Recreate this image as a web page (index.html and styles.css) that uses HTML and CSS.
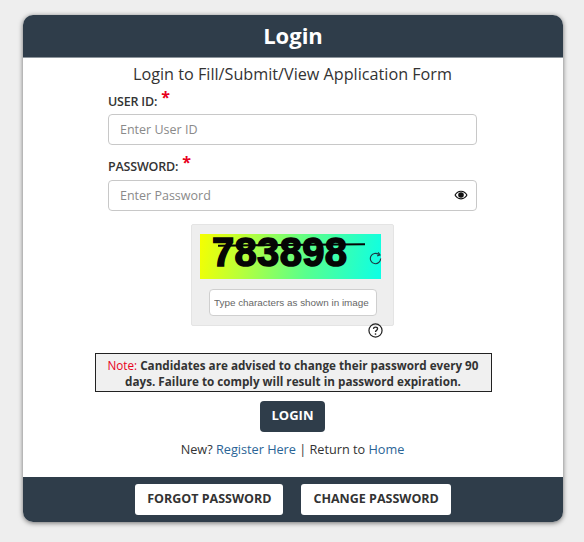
FILE: index.html
```html
<!DOCTYPE html>
<html lang="en">
<head>
  <meta charset="UTF-8">
  <meta name="viewport" content="width=device-width, initial-scale=1.0">
  <title>Login</title>
  <link rel="stylesheet" href="styles.css">
</head>
<body>

  <div class="card">
    <div class="card-head">Login</div>

    <div class="card-body">
      <p class="subtitle">Login to Fill/Submit/View Application Form</p>

      <div class="field">
        <label class="field-label">USER ID: <span class="req">*</span></label>
        <input type="text" class="text-input" placeholder="Enter User ID">
      </div>

      <div class="field">
        <label class="field-label">PASSWORD: <span class="req">*</span></label>
        <div class="input-wrap">
          <input type="password" class="text-input" placeholder="Enter Password">
          <svg class="eye" viewBox="0 0 16 16" aria-hidden="true">
            <path d="M8 3C4.500 3 1.700 5.200.500 8c1.200 2.800 4 5 7.500 5s6.300-2.200 7.500-5C14.300 5.200 11.500 3 8 3zm0 8.800C5.500 11.800 3.200 10.300 2 8c1.200-2.300 3.500-3.800 6-3.800s4.800 1.500 6 3.800c-1.200 2.300-3.500 3.800-6 3.800z"/>
            <circle cx="8" cy="8" r="3.200"/>
          </svg>
        </div>
      </div>

      <div class="captcha">
        <div class="captcha-img">
          <span class="captcha-code">783898</span>
          <span class="captcha-strike"></span>
          <svg class="refresh" viewBox="0 0 16 16" aria-hidden="true">
            <path d="M13.500 8A5.500 5.500 0 1 1 11.500 3.800" fill="none" stroke="#1d3a44" stroke-width="1.200"/>
            <path d="M10.800 1.500l2 2.800-3 .9" fill="none" stroke="#1d3a44" stroke-width="1.200"/>
          </svg>
        </div>
        <input type="text" class="captcha-input" placeholder="Type characters as shown in image">
        <svg class="help" viewBox="0 0 16 16" aria-hidden="true">
          <circle cx="8" cy="8" r="7" fill="none" stroke="#222" stroke-width="1.300"/>
          <path d="M5.800 6.300C5.900 5 6.800 4.300 8 4.300c1.300 0 2.200.8 2.200 1.900 0 1.700-2.200 1.600-2.200 3.400" fill="none" stroke="#222" stroke-width="1.400"/>
          <circle cx="8" cy="11.700" r=".9" fill="#222"/>
        </svg>
      </div>

      <div class="note">
        <span class="note-tag">Note:</span> <b>Candidates are advised to change their password every 90 days. Failure to comply will result in password expiration.</b>
      </div>

      <button class="btn-login">LOGIN</button>

      <p class="links">New? <a href="#">Register Here</a> | Return to <a href="#">Home</a></p>
    </div>

    <div class="card-foot">
      <button class="btn-foot">FORGOT PASSWORD</button>
      <button class="btn-foot">CHANGE PASSWORD</button>
    </div>
  </div>

</body>
</html>
```

FILE: styles.css
```css
* { box-sizing: border-box; }
body {
  margin: 0;
  height: 542px;
  padding: 15px 21px 0 23px;
  background-color: #eeeeee;
  font-family: "Open Sans", sans-serif;
  color: #333;
  overflow: hidden;
}
.card {
  width: 540px;
  height: 507px;
  background-color: white;
  border-radius: 10px;
  box-shadow: 0 1px 5px rgba(0, 0, 0, 0.55);
  display: flex;
  flex-direction: column;
  overflow: hidden;
}
.card-head {
  height: 43px;
  background-color: #2f3d4a;
  border-bottom: 1px solid #8d959c;
  color: white;
  font-size: 22px;
  font-weight: 700;
  line-height: 40px;
  text-align: center;
}
.card-body {
  flex: 1;
  display: flex;
  flex-direction: column;
  align-items: center;
}
.subtitle {
  margin: 5px 1px 0 0;
  font-size: 16.200px;
  line-height: 22px;
  text-align: center;
}
.field {
  width: 369px;
  margin-right: 1px;
}
.field-label {
  display: block;
  height: 29px;
  padding-top: 4px;
  font-size: 12.500px;
  line-height: 17px;
  font-weight: 600;
  letter-spacing: -0.2px;
}
.field + .field .field-label {
  height: 35px;
  padding-top: 9px;
}
.req {
  color: #e8001c;
  font-size: 16px;
  font-weight: 700;
  margin-left: 1px;
  vertical-align: 3px;
  line-height: 1;
}
.input-wrap { position: relative; }
.text-input {
  display: block;
  width: 100%;
  height: 31px;
  padding: 0 12px 0 11px;
  border: 1px solid #c8c8c8;
  border-radius: 4px;
  background: white;
  font-family: "Open Sans", sans-serif;
  font-size: 12.500px;
  color: #333;
}
.text-input::placeholder { color: #8a8a8a; opacity: 1; }
.eye {
  position: absolute;
  right: 9px;
  top: 8px;
  width: 14px;
  height: 14px;
  fill: #111;
}
.captcha {
  position: relative;
  width: 203px;
  height: 102px;
  margin: 13px 1px 0 0;
  padding: 9px 8px 0;
  background-color: #eeeeee;
  border: 1px solid #e4e4e4;
  border-radius: 2px;
}
.captcha-img {
  position: relative;
  width: 181px;
  height: 45px;
  background: linear-gradient(100deg, #f6ff00 0%, #b8ff3a 25%, #57ff8e 60%, #0cffe6 100%);
}
.captcha-code {
  display: block;
  padding-left: 12px;
  font-family: "Liberation Sans", sans-serif;
  font-size: 40px;
  font-weight: 700;
  line-height: 37px;
  letter-spacing: 0.300px;
  color: #050505;
  -webkit-text-stroke: 1.500px #050505;
}
.captcha-strike {
  position: absolute;
  left: 18px;
  top: 10px;
  width: 147px;
  height: 2px;
  background-color: #050505;
  transform: rotate(-0.5deg);
}
.refresh {
  position: absolute;
  right: -2px;
  top: 17px;
  width: 15px;
  height: 15px;
}
.captcha-input {
  display: block;
  width: 168px;
  height: 27px;
  margin: 10px 0 0 9px;
  padding: 0 4px;
  border: 1px solid #cfcfcf;
  border-radius: 4px;
  background: white;
  font-family: "Liberation Sans", sans-serif;
  font-size: 9.900px;
}
.captcha-input::placeholder { color: #666; opacity: 1; }
.help {
  position: absolute;
  left: 176px;
  top: 98px;
  width: 15px;
  height: 15px;
}
.note {
  width: 397px;
  height: 39px;
  margin-top: 27px;
  padding: 3px 4px 0;
  background-color: #f0f0f0;
  border: 1px solid #222;
  font-size: 11.700px;
  line-height: 16px;
  text-align: center;
}
.note-tag { color: #e8001c; }
.btn-login {
  width: 65px;
  height: 31px;
  margin: 9px 1px 0 0;
  padding: 0 0 3px;
  border: none;
  border-radius: 4px;
  background-color: #2f3d4a;
  color: white;
  font-family: "Open Sans", sans-serif;
  font-size: 13px;
  font-weight: 700;
}
.links {
  margin: 8px 1px 0 0;
  font-size: 12.700px;
  line-height: 18px;
}
.links a { color: #2a6496; text-decoration: none; }
.card-foot {
  height: 45px;
  background-color: #2f3d4a;
  display: flex;
  justify-content: center;
  align-items: flex-start;
  gap: 18px;
  padding-top: 7px;
}
.btn-foot {
  height: 31px;
  padding: 0 12px 2px;
  border: none;
  border-radius: 3px;
  background-color: white;
  color: #333;
  font-family: "Open Sans", sans-serif;
  font-size: 12.500px;
  font-weight: 700;
}
```
